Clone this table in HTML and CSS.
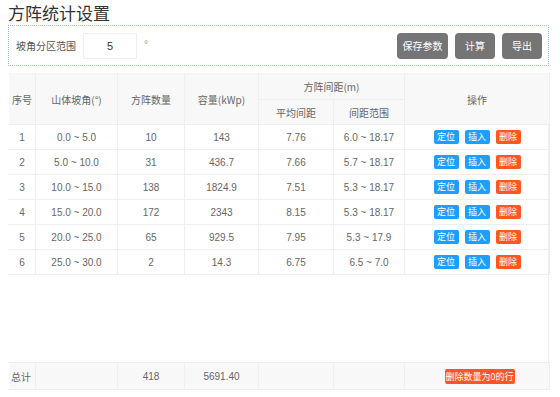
FILE: index.html
```html
<!DOCTYPE html>
<html>
<head>
<meta charset="utf-8">
<link rel="stylesheet" href="styles.css">
</head>
<body>
<div class="page">
  <h1 class="title">方阵统计设置</h1>
  <div class="toolbar">
    <span class="label">坡角分区范围</span>
    <div class="input">5</div>
    <span class="deg">°</span>
    <div class="spacer"></div>
    <button class="gbtn wide">保存参数</button>
    <button class="gbtn">计算</button>
    <button class="gbtn">导出</button>
  </div>
  <div class="grid">
    <table class="tbl">
      <colgroup>
        <col class="c1"><col class="c2"><col class="c3"><col class="c4"><col class="c5"><col class="c6"><col class="c7">
      </colgroup>
      <thead>
        <tr class="h1">
          <th rowspan="2">序号</th>
          <th rowspan="2">山体坡角(°)</th>
          <th rowspan="2">方阵数量</th>
          <th rowspan="2">容量(kWp)</th>
          <th colspan="2">方阵间距(m)</th>
          <th rowspan="2">操作</th>
        </tr>
        <tr class="h2">
          <th>平均间距</th>
          <th>间距范围</th>
        </tr>
      </thead>
      <tbody>
        <tr><td>1</td><td>0.0 ~ 5.0</td><td>10</td><td>143</td><td>7.76</td><td>6.0 ~ 18.17</td><td class="ops"><span class="b blue">定位</span><span class="b blue">插入</span><span class="b red">删除</span></td></tr>
        <tr><td>2</td><td>5.0 ~ 10.0</td><td>31</td><td>436.7</td><td>7.66</td><td>5.7 ~ 18.17</td><td class="ops"><span class="b blue">定位</span><span class="b blue">插入</span><span class="b red">删除</span></td></tr>
        <tr><td>3</td><td>10.0 ~ 15.0</td><td>138</td><td>1824.9</td><td>7.51</td><td>5.3 ~ 18.17</td><td class="ops"><span class="b blue">定位</span><span class="b blue">插入</span><span class="b red">删除</span></td></tr>
        <tr><td>4</td><td>15.0 ~ 20.0</td><td>172</td><td>2343</td><td>8.15</td><td>5.3 ~ 18.17</td><td class="ops"><span class="b blue">定位</span><span class="b blue">插入</span><span class="b red">删除</span></td></tr>
        <tr><td>5</td><td>20.0 ~ 25.0</td><td>65</td><td>929.5</td><td>7.95</td><td>5.3 ~ 17.9</td><td class="ops"><span class="b blue">定位</span><span class="b blue">插入</span><span class="b red">删除</span></td></tr>
        <tr><td>6</td><td>25.0 ~ 30.0</td><td>2</td><td>14.3</td><td>6.75</td><td>6.5 ~ 7.0</td><td class="ops"><span class="b blue">定位</span><span class="b blue">插入</span><span class="b red">删除</span></td></tr>
      </tbody>
    </table>
    <div class="fill"></div>
    <table class="tbl foot">
      <colgroup>
        <col class="c1"><col class="c2"><col class="c3"><col class="c4"><col class="c5"><col class="c6"><col class="c7">
      </colgroup>
      <tbody>
        <tr><td class="left">总计</td><td></td><td>418</td><td>5691.40</td><td></td><td></td><td class="ops"><span class="b red long">删除数量为0的行</span></td></tr>
      </tbody>
    </table>
  </div>
</div>
</body>
</html>
```

FILE: styles.css
```css
* { box-sizing: border-box; }
html, body { margin: 0; padding: 0; background: #fff; }
body {
  font-family: "Liberation Sans", "Noto Sans CJK SC", sans-serif;
  color: #666;
  font-size: 10px;
}
.page { padding: 0 11px 0 8px; width: 560px; }
.title {
  margin: 0;
  height: 25px;
  padding-top: 3px;
  font-family: "Noto Sans CJK SC", sans-serif;
  font-size: 17px;
  font-weight: normal;
  line-height: 20px;
  color: #333;
}
.toolbar {
  height: 41px;
  border: 1px dotted #9db4d8;
  display: flex;
  align-items: center;
  padding: 0 6px 0 7px;
}
.label { font-family: "Noto Sans CJK SC", sans-serif; font-size: 10px; color: #555; width: 67px; }
.input {
  width: 54px; height: 26px;
  border: 1px solid #eeeeee;
  text-align: center;
  line-height: 24px;
  font-size: 11px;
  color: #333;
}
.deg { margin-left: 7px; color: #999; font-size: 10px; margin-top: -2px; }
.spacer { flex: 1; }
.gbtn {
  height: 26px;
  width: 40px;
  margin-left: 7px;
  border: 0;
  border-radius: 4px;
  background: #757575;
  color: #fff;
  font-family: "Noto Sans CJK SC", sans-serif;
  font-size: 10px;
  padding: 0;
}
.gbtn.wide { width: 51px; margin-left: 0; }
.grid {
  margin-top: 7px;
  height: 317px;
  display: flex;
  flex-direction: column;
  border-right: 1px solid #eeeeee;
}
.tbl {
  width: 541px;
  border-collapse: collapse;
  table-layout: fixed;
}
.c1 { width: 27px; }
.c2 { width: 82px; }
.c3 { width: 67px; }
.c4 { width: 74px; }
.c5 { width: 75px; }
.c6 { width: 71px; }
.c7 { width: 145px; }
.tbl th, .tbl td {
  border: 1px solid #eeeeee;
  text-align: center;
  padding: 0;
  white-space: nowrap;
  overflow: hidden;
}
.tbl th {
  background: #f8f8f8;
  font-weight: normal;
  font-family: "Noto Sans CJK SC", sans-serif;
  font-size: 10px;
  color: #666;
}
.tbl tr:first-child th { border-top-color: #f4f4f4; }
.tbl th:first-child, .tbl td:first-child { border-left-color: transparent; }
.h1 th { height: 26px; }
.h2 th { height: 25px; }
.tbl td { height: 25px; font-size: 10px; color: #666; }
.ops { font-size: 0; }
.b {
  display: inline-block;
  height: 14px;
  width: 25px;
  line-height: 14px;
  font-family: "Noto Sans CJK SC", sans-serif;
  font-size: 9px;
  color: #fff;
  border-radius: 2px;
  margin: 0 3px;
  vertical-align: middle;
}
.b.blue { background: #1e9fff; }
.b.red { background: #ff5722; }
.b.long { width: 70px; height: 15px; line-height: 15px; margin-left: 8px; }
.fill { flex: 1; }
.foot td { background: #f8f8f8; height: 27px; }
.foot td.left { text-align: left; padding-left: 2px; font-family: "Noto Sans CJK SC", sans-serif; }
```
